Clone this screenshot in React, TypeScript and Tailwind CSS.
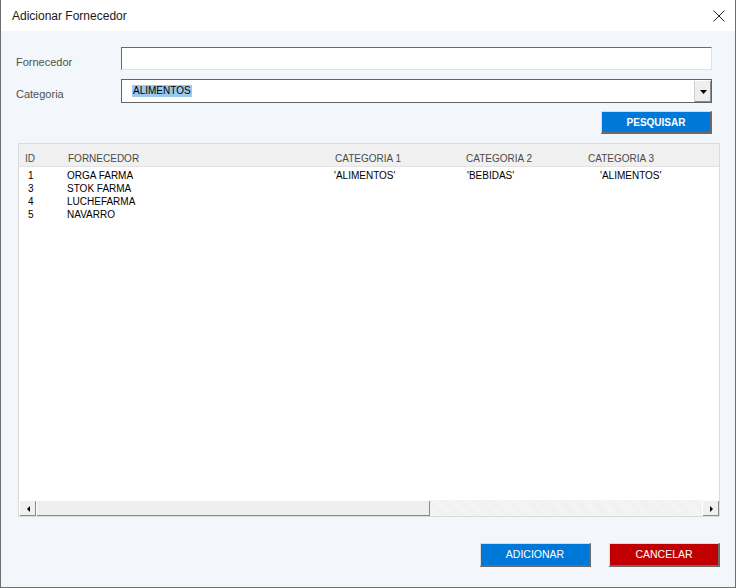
import React from 'react'

const rows = [
    { id: '1', name: 'ORGA FARMA', c1: "'ALIMENTOS'", c2: "'BEBIDAS'", c3: "'ALIMENTOS'" },
    { id: '3', name: 'STOK FARMA', c1: '', c2: '', c3: '' },
    { id: '4', name: 'LUCHEFARMA', c1: '', c2: '', c3: '' },
    { id: '5', name: 'NAVARRO', c1: '', c2: '', c3: '' },
]

const App = () => {
    return (
        <div className="w-[736px] h-[588px] flex flex-col bg-[#f3f6fa] border-x border-b border-[#6f6f6f] font-['Liberation_Sans',Arial,sans-serif] text-black overflow-hidden">
            {/* title bar */}
            <div className="h-[31px] shrink-0 bg-white flex items-center justify-between pl-[11px] pr-[10px]">
                <span className="text-[12px] text-[#1a1a1a]">Adicionar Fornecedor</span>
                <svg width="12" height="12" viewBox="0 0 12 12">
                    <path d="M0.5 0.5 L11.5 11.5 M11.5 0.5 L0.5 11.5" stroke="#222" strokeWidth="1" />
                </svg>
            </div>

            {/* form */}
            <div className="flex flex-col pl-[15px] pr-[23px] pt-[16px]">
                <div className="flex items-center h-[23px]">
                    <label className="w-[105px] text-[11px] text-[#505050] pt-[7px]">Fornecedor</label>
                    <div className="flex-1 h-[23px] bg-white border-t border-l border-[#6a6a6a] border-r border-r-[#e2e2e2] border-b border-b-[#e2e2e2]" />
                </div>
                <div className="flex items-center h-[24px] mt-[9px]">
                    <label className="w-[105px] text-[11px] text-[#505050] pt-[6px]">Categoria</label>
                    <div className="flex-1 h-[24px] bg-white border border-[#646464] flex items-center">
                        <span className="ml-[10px] px-[1px] h-[12px] leading-[12px] text-[10px] bg-[#99c9ef] text-black">ALIMENTOS</span>
                        <div className="ml-auto h-full w-[17px] bg-[#eeeeee] border-l border-l-[#cfcfcf] border-t border-t-white flex items-center justify-center shadow-[inset_-1px_-1px_0_#8a8a8a]">
                            <svg width="7" height="4" viewBox="0 0 7 4">
                                <path d="M0 0 H7 L3.5 4 Z" fill="#000" />
                            </svg>
                        </div>
                    </div>
                </div>
                <div className="flex justify-end mt-[8px]">
                    <button className="w-[111px] h-[23px] bg-[#0078d7] text-white text-[10px] font-bold border-t border-l border-[#dcdcdc] border-r-2 border-b-2 border-r-[#6a6a6a] border-b-[#6a6a6a]">
                        PESQUISAR
                    </button>
                </div>
            </div>

            {/* list */}
            <div className="ml-[17px] mr-[15px] mt-[9px] h-[374px] flex flex-col bg-white border border-[#dadada]">
                <div className="h-[23px] shrink-0 bg-[#f0f0f0] border-b border-[#e2e2e2] flex items-center text-[10px] text-[#4a4a4a] pt-[7px]">
                    <div className="w-[48px] pl-[6px]">ID</div>
                    <div className="w-[267px] pl-[1px]">FORNECEDOR</div>
                    <div className="w-[132px] pl-[1px]">CATEGORIA 1</div>
                    <div className="w-[122px]">CATEGORIA 2</div>
                    <div>CATEGORIA 3</div>
                </div>
                <div className="flex-1 flex flex-col pt-[2px] text-[10px]">
                    {rows.map((r) => (
                        <div key={r.id} className="flex h-[13px] leading-[13px]">
                            <div className="w-[48px] pl-[9px]">{r.id}</div>
                            <div className="w-[267px]">{r.name}</div>
                            <div className="w-[132px]">{r.c1}</div>
                            <div className="w-[122px] pl-[1px]">{r.c2}</div>
                            <div className="pl-[12px]">{r.c3}</div>
                        </div>
                    ))}
                </div>
                {/* horizontal scrollbar */}
                <div className="h-[16px] shrink-0 flex bg-[#f3f3f3] bg-[repeating-linear-gradient(45deg,#f6f6f6_0px,#f6f6f6_1px,#efefef_1px,#efefef_2px)]">
                    <div className="w-[17px] h-full bg-[#f0f0f0] border-t border-l border-white shadow-[inset_-1px_-1px_0_#8a8a8a] flex items-center justify-center">
                        <svg width="3" height="6" viewBox="0 0 3 6">
                            <path d="M3 0 V6 L0 3 Z" fill="#000" />
                        </svg>
                    </div>
                    <div className="w-[394px] h-full bg-[#efefef] border-t border-l border-white shadow-[inset_-1px_-1px_0_#8a8a8a]" />
                    <div className="ml-auto w-[17px] h-full bg-[#f0f0f0] border-t border-l border-white shadow-[inset_-1px_-1px_0_#8a8a8a] flex items-center justify-center">
                        <svg width="3" height="6" viewBox="0 0 3 6">
                            <path d="M0 0 V6 L3 3 Z" fill="#000" />
                        </svg>
                    </div>
                </div>
            </div>

            {/* footer buttons */}
            <div className="flex justify-end gap-[18px] mr-[15px] mt-[26px]">
                <button className="w-[111px] h-[24px] bg-[#0078d7] text-white text-[10.5px] border-t border-l border-[#dcdcdc] border-r-2 border-b-2 border-r-[#6a6a6a] border-b-[#6a6a6a]">
                    ADICIONAR
                </button>
                <button className="w-[111px] h-[24px] bg-[#c00000] text-white text-[10.5px] border-t border-l border-[#dcdcdc] border-r-2 border-b-2 border-r-[#6a6a6a] border-b-[#6a6a6a]">
                    CANCELAR
                </button>
            </div>
        </div>
    )
}

export default App
